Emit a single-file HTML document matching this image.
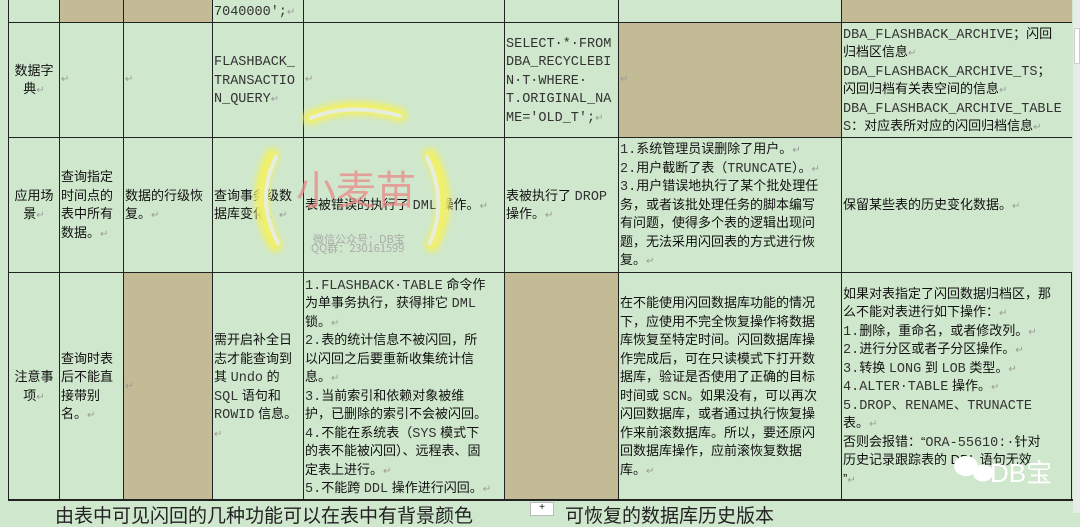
<!DOCTYPE html>
<html><head><meta charset="utf-8">
<style>
*{margin:0;padding:0;box-sizing:border-box}
body{width:1080px;height:513px;overflow:hidden;background:#cfe7cc;position:relative;font-family:"Liberation Sans","Noto Sans CJK SC",sans-serif;font-size:13px;color:#111;}
.c{position:absolute;border-left:1px solid #222;border-top:1px solid #222;display:flex;align-items:center;padding:0 1px;line-height:18.5px;overflow:hidden}
.c>div{line-height:18.5px}
.t{background:#c2bb95}
.m{font-family:"Liberation Mono","Noto Sans CJK SC",monospace;font-size:13.5px;color:#333;line-height:10px}
.r{color:#999;font-size:10px;line-height:10px}
.ctr{text-align:center;justify-content:center}
</style></head><body>
<!-- row 0 -->
<div class="c" style="left:8px;top:-1px;width:51px;height:23px"></div>
<div class="c t" style="left:59px;top:-1px;width:64px;height:23px"></div>
<div class="c t" style="left:123px;top:-1px;width:89px;height:23px"></div>
<div class="c" style="left:212px;top:-1px;width:91px;height:23px"><div><span class="m">7040000';</span><span class="r">↵</span></div></div>
<div class="c" style="left:303px;top:-1px;width:201px;height:23px"></div>
<div class="c" style="left:504px;top:-1px;width:114px;height:23px"></div>
<div class="c" style="left:618px;top:-1px;width:223px;height:23px"></div>
<div class="c t" style="left:841px;top:-1px;width:231px;height:23px"></div>
<!-- row 1 -->
<div class="c ctr" style="left:8px;top:22px;width:51px;height:115px"><div>数据字<br>典<span class="r">↵</span></div></div>
<div class="c" style="left:59px;top:22px;width:64px;height:115px"><span class="r">↵</span></div>
<div class="c" style="left:123px;top:22px;width:89px;height:115px"><span class="r">↵</span></div>
<div class="c" style="left:212px;top:22px;width:91px;height:115px"><div><span class="m">FLASHBACK_<br>TRANSACTIO<br>N_QUERY</span><span class="r">↵</span></div></div>
<div class="c" style="left:303px;top:22px;width:201px;height:115px"><span class="r">↵</span></div>
<div class="c" style="left:504px;top:22px;width:114px;height:115px"><div><span class="m">SELECT·*·FROM<br>DBA_RECYCLEBI<br>N·T·WHERE·<br>T.ORIGINAL_NA<br>ME='OLD_T';</span><span class="r">↵</span></div></div>
<div class="c t" style="left:618px;top:22px;width:223px;height:115px"><span class="r">↵</span></div>
<div class="c" style="left:841px;top:22px;width:231px;height:115px"><div><span class="m">DBA_FLASHBACK_ARCHIVE</span>；闪回<br>归档区信息<span class="r">↵</span><br><span class="m">DBA_FLASHBACK_ARCHIVE_TS</span>；<br>闪回归档有关表空间的信息<span class="r">↵</span><br><span class="m">DBA_FLASHBACK_ARCHIVE_TABLE<br>S</span>：对应表所对应的闪回归档信息<span class="r">↵</span></div></div>
<!-- row 2 -->
<div class="c ctr" style="left:8px;top:137px;width:51px;height:135px"><div>应用场<br>景<span class="r">↵</span></div></div>
<div class="c" style="left:59px;top:137px;width:64px;height:135px"><div>查询指定<br>时间点的<br>表中所有<br>数据。<span class="r">↵</span></div></div>
<div class="c" style="left:123px;top:137px;width:89px;height:135px"><div>数据的行级恢<br>复。<span class="r">↵</span></div></div>
<div class="c" style="left:212px;top:137px;width:91px;height:135px"><div>查询事务级数<br>据库变化。<span class="r">↵</span></div></div>
<div class="c" style="left:303px;top:137px;width:201px;height:135px"><div>表被错误的执行了 <span class="m">DML</span> 操作。<span class="r">↵</span></div></div>
<div class="c" style="left:504px;top:137px;width:114px;height:135px"><div>表被执行了 <span class="m">DROP</span><br>操作。<span class="r">↵</span></div></div>
<div class="c" style="left:618px;top:137px;width:223px;height:135px;align-items:flex-start;padding-top:2px"><div><span class="m">1.</span>系统管理员误删除了用户。<span class="r">↵</span><br><span class="m">2.</span>用户截断了表（<span class="m">TRUNCATE</span>）。<span class="r">↵</span><br><span class="m">3.</span>用户错误地执行了某个批处理任<br>务，或者该批处理任务的脚本编写<br>有问题，使得多个表的逻辑出现问<br>题，无法采用闪回表的方式进行恢<br>复。<span class="r">↵</span></div></div>
<div class="c" style="left:841px;top:137px;width:231px;height:135px"><div>保留某些表的历史变化数据。<span class="r">↵</span></div></div>
<!-- row 3 -->
<div class="c ctr" style="left:8px;top:272px;width:51px;height:228px"><div>注意事<br>项<span class="r">↵</span></div></div>
<div class="c" style="left:59px;top:272px;width:64px;height:228px"><div>查询时表<br>后不能直<br>接带别<br>名。<span class="r">↵</span></div></div>
<div class="c t" style="left:123px;top:272px;width:89px;height:228px"><span class="r">↵</span></div>
<div class="c" style="left:212px;top:272px;width:91px;height:228px"><div>需开启补全日<br>志才能查询到<br>其 <span class="m">Undo</span> 的<br><span class="m">SQL</span> 语句和<br><span class="m">ROWID</span> 信息。<span class="r">↵</span></div></div>
<div class="c" style="left:303px;top:272px;width:201px;height:228px;line-height:18.7px"><div><span class="m">1.FLASHBACK·TABLE</span> 命令作<br>为单事务执行，获得排它 <span class="m">DML</span><br>锁。<span class="r">↵</span><br><span class="m">2.</span>表的统计信息不被闪回，所<br>以闪回之后要重新收集统计信<br>息。<span class="r">↵</span><br><span class="m">3.</span>当前索引和依赖对象被维<br>护，已删除的索引不会被闪回。<br><span class="m">4.</span>不能在系统表（<span class="m">SYS</span> 模式下<br>的表不能被闪回）、远程表、固<br>定表上进行。<span class="r">↵</span><br><span class="m">5.</span>不能跨 <span class="m">DDL</span> 操作进行闪回。<span class="r">↵</span></div></div>
<div class="c t" style="left:504px;top:272px;width:114px;height:228px"></div>
<div class="c" style="left:618px;top:272px;width:223px;height:228px"><div>在不能使用闪回数据库功能的情况<br>下，应使用不完全恢复操作将数据<br>库恢复至特定时间。闪回数据库操<br>作完成后，可在只读模式下打开数<br>据库，验证是否使用了正确的目标<br>时间或 <span class="m">SCN</span>。如果没有，可以再次<br>闪回数据库，或者通过执行恢复操<br>作来前滚数据库。所以，要还原闪<br>回数据库操作，应前滚恢复数据<br>库。<span class="r">↵</span></div></div>
<div class="c" style="left:841px;top:272px;width:231px;height:228px;border-right:1px solid #222"><div>如果对表指定了闪回数据归档区，那<br>么不能对表进行如下操作：<span class="r">↵</span><br><span class="m">1.</span>删除，重命名，或者修改列。<span class="r">↵</span><br><span class="m">2.</span>进行分区或者子分区操作。<span class="r">↵</span><br><span class="m">3.</span>转换 <span class="m">LONG</span> 到 <span class="m">LOB</span> 类型。<span class="r">↵</span><br><span class="m">4.ALTER·TABLE</span> 操作。<span class="r">↵</span><br><span class="m">5.DROP、RENAME、TRUNACTE</span><br>表。<span class="r">↵</span><br>否则会报错：“<span class="m">ORA-55610:·</span>针对<br>历史记录跟踪表的 DDL 语句无效<br>”<span class="r">↵</span></div></div>
<div style="position:absolute;left:8px;top:499px;width:1065px;height:2px;background:#222"></div>
<div style="position:absolute;left:1073px;top:0;width:7px;height:513px;background:#e8ece8"></div>
<div style="position:absolute;left:1074px;top:28px;width:6px;height:36px;background:#fff;border:1px solid #ccc"></div>
<!-- bottom partial text -->
<div style="position:absolute;left:55px;top:507px;font-size:19px;color:#222;white-space:nowrap;line-height:20px">由表中可见闪回的几种功能可以在表中有背景颜色</div>
<div style="position:absolute;left:530px;top:502px;width:24px;height:14px;background:#fff;border:1px solid #bbb;font-size:10px;text-align:center;line-height:10px">+</div>
<div style="position:absolute;left:565px;top:507px;font-size:19px;color:#222;white-space:nowrap;line-height:20px">可恢复的数据库历史版本</div>
<!-- watermark -->
<svg style="position:absolute;left:0;top:0" width="1080" height="513">
<defs><filter id="g"><feGaussianBlur stdDeviation="3"/></filter></defs>
<g stroke="#f0f06a" stroke-width="14" fill="none" filter="url(#g)" stroke-linecap="round">
<path d="M310 118 Q350 100 400 115"/>
<path d="M272 155 Q250 200 275 245"/>
<path d="M430 155 Q455 200 432 245"/>
</g>
<g stroke="#e8eedd" stroke-width="4" fill="none" stroke-linecap="round">
<path d="M311 118 Q350 102 400 116"/>
<path d="M276 157 Q255 200 278 243"/>
<path d="M427 157 Q448 200 430 243"/>
</g>
<text x="296" y="204" font-size="40" fill="#e88888" fill-opacity="0.75" font-family="Noto Sans CJK SC,sans-serif">小麦苗</text>
<text x="313" y="243" font-size="11" fill="#aaa" font-family="Noto Sans CJK SC,sans-serif">微信公众号：DB宝</text>
<text x="311" y="252" font-size="11" fill="#aaa" font-family="Noto Sans CJK SC,sans-serif">QQ群：230161599</text>
<ellipse cx="966" cy="466" rx="12" ry="10" fill="#fff"/>
<ellipse cx="983" cy="473" rx="10" ry="8.5" fill="#fff"/>
<text x="990" y="482" font-size="26" fill="#fff" font-family="Liberation Sans,Noto Sans CJK SC,sans-serif">DB宝</text>
</svg>
</body></html>
